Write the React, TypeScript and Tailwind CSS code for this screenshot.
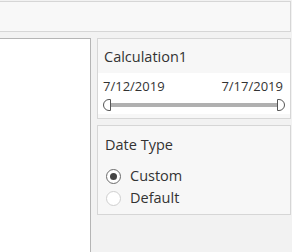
import React from 'react'

const font = { fontFamily: '"Open Sans", "Liberation Sans", sans-serif' }

function Radio({ label, checked }: { label: string; checked?: boolean }) {
  return (
    <div className="flex items-center h-[22px]">
      <span
        className={`flex items-center justify-center w-[15px] h-[15px] rounded-full border bg-white ${
          checked ? 'border-[#6b6b6b]' : 'border-[#cfcfcf]'
        }`}
      >
        {checked && <span className="w-[7px] h-[7px] rounded-full bg-[#444]" />}
      </span>
      <span className="ml-[9px] text-[14.5px] text-[#333]">{label}</span>
    </div>
  )
}

export default function App() {
  return (
    <div className="w-[292px] h-[252px] bg-[#f2f2f2] flex flex-col overflow-hidden" style={font}>
      <div className="mt-px mr-px h-[31px] bg-[#f8f8f8] border-y border-r border-[#d6d6d6]" />
      <div className="mt-[6px] flex flex-1 min-h-0">
        <div className="w-[91px] bg-white border-t border-r border-[#b5b5b5]" />
        <div className="ml-[6px] w-[194px] flex flex-col gap-[6px]">
          <div className="h-[81px] border border-[#d6d6d6] bg-[#f7f7f7] flex flex-col">
            <div className="h-[34px] flex items-center pl-[6px] pt-[2px] text-[14.5px] text-[#333]">Calculation1</div>
            <div className="bg-white px-[5px] pt-[5px] h-[41px]">
              <div className="flex justify-between text-[13px] leading-[17px] text-[#333]">
                <span>7/12/2019</span>
                <span className="mr-[2px]">7/17/2019</span>
              </div>
              <div className="mt-[4px] flex items-center">
                <div className="w-[8px] h-[12px] border border-[#555] bg-white rounded-l-[6px]" />
                <div className="flex-1 h-[4px] bg-[#b0b0b0]" />
                <div className="w-[8px] h-[12px] border border-[#555] bg-white rounded-r-[6px]" />
              </div>
            </div>
          </div>
          <div className="h-[90px] border border-[#d6d6d6] bg-[#f7f7f7] flex flex-col">
            <div className="h-[36px] flex items-center pl-[7px] pt-[2px] text-[14.5px] text-[#333]">Date Type</div>
            <div className="pl-[8px] mt-[3px] flex flex-col">
              <Radio label="Custom" checked />
              <Radio label="Default" />
            </div>
          </div>
        </div>
      </div>
    </div>
  )
}
